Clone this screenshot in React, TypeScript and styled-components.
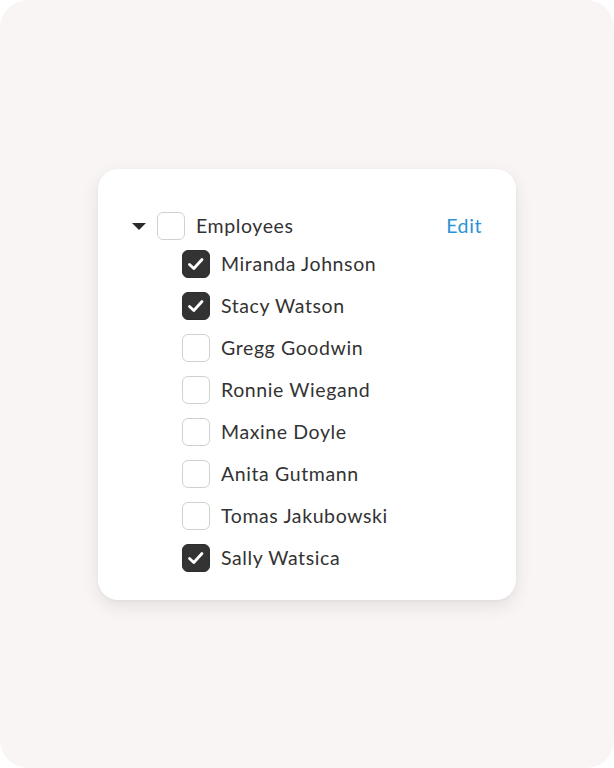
import * as React from 'react';
import styled, { createGlobalStyle } from 'styled-components';

const GlobalStyle = createGlobalStyle`
  html, body {
    margin: 0;
    padding: 0;
    background: #ffffff;
  }
  body {
    font-family: Lato, "Open Sans", sans-serif;
  }
`;

const Frame = styled.div`
  width: 614px;
  height: 768px;
  box-sizing: border-box;
  background: #f8f5f4;
  border-radius: 28px;
  padding-top: 169px;
  display: flex;
  justify-content: center;
  align-items: flex-start;
`;

const Card = styled.div`
  width: 418px;
  box-sizing: border-box;
  background: #ffffff;
  border-radius: 20px;
  padding: 40px 34px 21px 34px;
  box-shadow: 0 6px 18px rgba(0, 0, 0, 0.09), 0 1px 3px rgba(0, 0, 0, 0.04);
`;

const Header = styled.div`
  display: flex;
  align-items: center;
  height: 34px;
`;

const Row = styled.div`
  display: flex;
  align-items: center;
  height: 42px;
  padding-left: 50px;
`;

const Caret = styled.div`
  width: 0;
  height: 0;
  border-left: 7px solid transparent;
  border-right: 7px solid transparent;
  border-top: 7px solid #2b2b2b;
  margin-right: 11px;
`;

const Box = styled.div<{ $checked?: boolean }>`
  width: 28px;
  height: 28px;
  box-sizing: border-box;
  border-radius: 6px;
  border: 1.5px solid ${p => (p.$checked ? '#2e2e2e' : '#d3d1d0')};
  background: ${p => (p.$checked ? '#333333' : '#ffffff')};
  display: flex;
  align-items: center;
  justify-content: center;
  flex-shrink: 0;
`;

const Label = styled.span`
  font-size: 19.5px;
  line-height: 24px;
  color: #333333;
  margin: -1px 0 0 11px;
  flex: 1;
  letter-spacing: 0.6px;
`;

const EditLink = styled.a`
  font-size: 19.5px;
  line-height: 24px;
  margin-top: -1px;
  letter-spacing: 0.6px;
  color: #2b93d6;
  cursor: pointer;
`;

const Check = () => (
  <svg width="20" height="20" viewBox="0 0 20 20" fill="none">
    <path
      d="M3.5 10.5 L7.8 14.5 L16 5.5"
      stroke="#ffffff"
      strokeWidth="2.8"
      strokeLinecap="round"
      strokeLinejoin="round"
    />
  </svg>
);

type Employee = {
  name: string;
  checked: boolean;
};

const employees: Employee[] = [
  { name: 'Miranda Johnson', checked: true },
  { name: 'Stacy Watson', checked: true },
  { name: 'Gregg Goodwin', checked: false },
  { name: 'Ronnie Wiegand', checked: false },
  { name: 'Maxine Doyle', checked: false },
  { name: 'Anita Gutmann', checked: false },
  { name: 'Tomas Jakubowski', checked: false },
  { name: 'Sally Watsica', checked: true },
];

const App: React.FC = () => {
  return (
    <>
      <GlobalStyle />
      <Frame>
        <Card>
          <Header>
            <Caret />
            <Box />
            <Label>Employees</Label>
            <EditLink>Edit</EditLink>
          </Header>
          {employees.map(e => (
            <Row key={e.name}>
              <Box $checked={e.checked}>{e.checked && <Check />}</Box>
              <Label>{e.name}</Label>
            </Row>
          ))}
        </Card>
      </Frame>
    </>
  );
};

export default App;
